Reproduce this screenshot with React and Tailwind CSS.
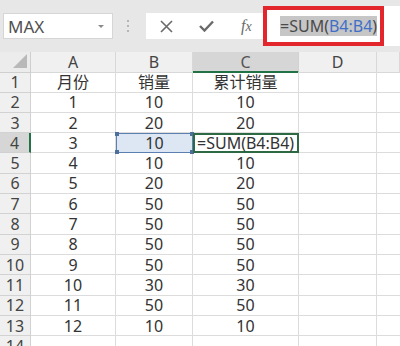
import React from "react";

const rows = [
  ["月份", "销量", "累计销量"],
  ["1", "10", "10"],
  ["2", "20", "20"],
  ["3", "10", "=SUM(B4:B4)"],
  ["4", "10", "10"],
  ["5", "20", "20"],
  ["6", "50", "50"],
  ["7", "50", "50"],
  ["8", "50", "50"],
  ["9", "50", "50"],
  ["10", "30", "30"],
  ["11", "50", "50"],
  ["12", "10", "10"],
  ["14", "", ""],
];

const font = { fontFamily: '"Noto Sans", "Noto Sans CJK SC", sans-serif' };

function Toolbar() {
  return (
    <div className="flex h-[52px] items-center bg-[#e7e7e7] pl-[3px]">
      <div className="flex h-[26px] w-[110px] items-center justify-between border border-[#d6d6d6] bg-white pl-[4px] pr-[8px]">
        <span className="text-[17px] leading-none text-[#505050]">MAX</span>
        <svg width="6" height="3" viewBox="0 0 6 3">
          <path d="M0 0 L6 0 L3 3 Z" fill="#8a8a8a" />
        </svg>
      </div>
      <div className="ml-[14px] flex flex-col gap-[3px]">
        <span className="h-[2px] w-[2px] bg-[#b5b5b5]" />
        <span className="h-[2px] w-[2px] bg-[#b5b5b5]" />
        <span className="h-[2px] w-[2px] bg-[#b5b5b5]" />
      </div>
      <div className="ml-[17px] flex h-[26px] w-[117px] items-center bg-white">
        <svg className="ml-[14px]" width="13" height="13" viewBox="0 0 13 13">
          <path d="M1 1 L12 12 M12 1 L1 12" stroke="#6a6a6a" strokeWidth="1.6" />
        </svg>
        <svg className="ml-[26px]" width="15" height="12" viewBox="0 0 15 12">
          <path d="M1 6 L5.5 10.5 L14 1.5" stroke="#6a6a6a" strokeWidth="2.4" fill="none" />
        </svg>
        <span
          className="ml-[27px] text-[16px] italic leading-none text-[#6a6a6a]"
          style={{ fontFamily: '"Liberation Serif", serif' }}
        >
          f<span className="text-[14px]">x</span>
        </span>
      </div>
      <div className="flex h-[40px] flex-1 items-center bg-white">
        <div className="flex h-[40px] w-[121px] items-center border-[4px] border-[#e3262c] pl-[13px]">
          <span className="bg-[#c6c6c6] text-[16px] leading-[20px] text-[#4a4a4a]">
            =SUM(<span className="text-[#3f6fc6]">B4:B4</span>)
          </span>
        </div>
      </div>
    </div>
  );
}

function Grid() {
  const cols = ["A", "B", "C", "D", ""];
  return (
    <div className="grid grid-cols-[31px_85px_77px_106px_78px_1fr] auto-rows-[20.3px] text-[16px] text-[#333]">
      <div className="relative h-[21px] border-b border-r border-[#cfcfcf] bg-[#ececec]">
        <svg className="absolute right-[3px] bottom-[4px]" width="14" height="14" viewBox="0 0 14 14">
          <path d="M14 0 L14 14 L0 14 Z" fill="#b9b9b9" />
        </svg>
      </div>
      {cols.map((c, i) => (
        <div
          key={c + i}
          className={
            "flex h-[21px] items-center justify-center border-r leading-none " +
            (c === "C"
              ? "border-b-2 border-[#d2d2d2] border-b-[#217346] bg-[#d6d6d6] text-[#555]"
              : "border-b border-[#d8d8d8] bg-[#f0f0f0] text-[#444]")
          }
        >
          {c}
        </div>
      ))}
      {rows.map((r, ri) => {
        const n = ri + 1;
        const sel = n === 4;
        return (
          <React.Fragment key={n}>
            <div
              className={
                "flex items-center justify-center border-b leading-none text-[#444] " +
                (sel
                  ? "border-r-2 border-[#d0d0d0] border-r-[#217346] bg-[#d6d6d6]"
                  : "border-r border-[#d2d2d2] bg-[#f0f0f0]")
              }
            >
              {n}
            </div>
            <div className="flex items-center justify-center border-b border-r border-[#dcdcdc] leading-none">
              {n === 14 ? "" : r[0]}
            </div>
            {sel ? (
              <div className="relative flex items-center justify-center border border-[#5b7fb0] bg-[#dde7f3] leading-none">
                {r[1]}
                <span className="absolute -left-[2px] -top-[2px] h-[4px] w-[4px] bg-[#4c6f9e]" />
                <span className="absolute -right-[2px] -top-[2px] h-[4px] w-[4px] bg-[#4c6f9e]" />
                <span className="absolute -left-[2px] -bottom-[2px] h-[4px] w-[4px] bg-[#4c6f9e]" />
                <span className="absolute -right-[2px] -bottom-[2px] h-[4px] w-[4px] bg-[#4c6f9e]" />
              </div>
            ) : (
              <div className="flex items-center justify-center border-b border-r border-[#dcdcdc] leading-none">
                {r[1]}
              </div>
            )}
            {sel ? (
              <div className="relative flex items-center border-2 border-[#2d6a44] pl-[2px] leading-none">
                {r[2]}
              </div>
            ) : (
              <div className="flex items-center justify-center border-b border-r border-[#dcdcdc] leading-none">
                {r[2]}
              </div>
            )}
            <div className="border-b border-r border-[#dcdcdc]" />
            <div className="border-b border-[#dcdcdc]" />
          </React.Fragment>
        );
      })}
    </div>
  );
}

export default function App() {
  return (
    <div className="h-[346px] w-[400px] overflow-hidden bg-white" style={font}>
      <Toolbar />
      <Grid />
    </div>
  );
}
